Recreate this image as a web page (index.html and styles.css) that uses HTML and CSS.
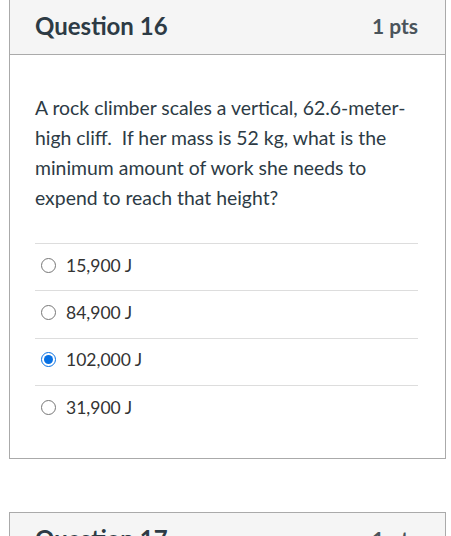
FILE: index.html
```html
<!DOCTYPE html>
<html>
<head>
  <meta charset="utf-8">
  <link rel="stylesheet" href="styles.css">
</head>
<body>
  <div class="question">
    <div class="question-header">
      <span class="question-name">Question 16</span>
      <span class="question-points">1 pts</span>
    </div>
    <div class="question-body">
      <div class="question-text">
        A rock climber scales a vertical, 62.6-meter-high cliff.&nbsp; If her mass is 52 kg, what is the minimum amount of work she needs to expend to reach that height?
      </div>
      <div class="answers">
        <label class="answer">
          <input type="radio" name="q16">
          <span>15,900 J</span>
        </label>
        <label class="answer">
          <input type="radio" name="q16">
          <span>84,900 J</span>
        </label>
        <label class="answer">
          <input type="radio" name="q16" checked>
          <span>102,000 J</span>
        </label>
        <label class="answer">
          <input type="radio" name="q16">
          <span>31,900 J</span>
        </label>
      </div>
    </div>
  </div>

  <div class="question">
    <div class="question-header">
      <span class="question-name">Question 17</span>
      <span class="question-points">1 pts</span>
    </div>
  </div>
</body>
</html>
```

FILE: styles.css
```css
body {
  margin: 0;
  padding: 0 5px 0 9px;
  font-family: Lato, 'Open Sans', sans-serif;
  color: #2d3b45;
  background: white;
}

.question {
  border: 1px solid #aaaaaa;
  margin-top: -1px;
  margin-bottom: 54px;
}

.question-header {
  display: flex;
  justify-content: space-between;
  align-items: center;
  height: 55px;
  padding: 0 27px 3px 25px;
  box-sizing: border-box;
  background: #f5f5f5;
  border-bottom: 1px solid #aaaaaa;
}

.question-name {
  font-size: 24px;
  font-weight: 700;
}

.question-points {
  font-size: 21px;
  font-weight: 700;
  color: #4a545b;
}

.question-body {
  padding: 38px 27px 26px 25px;
}

.question-text {
  font-size: 19.4px;
  line-height: 30px;
}

.answers {
  margin-top: 30px;
}

.answer {
  display: flex;
  align-items: center;
  gap: 10px;
  height: 47.3px;
  padding-left: 6px;
  padding-bottom: 4px;
  box-sizing: border-box;
  border-top: 1px solid #dddddd;
  font-size: 17.5px;
  color: #333;
}

.answer input {
  width: 15px;
  height: 15px;
  margin: 0;
  accent-color: #0770e3;
}
```
